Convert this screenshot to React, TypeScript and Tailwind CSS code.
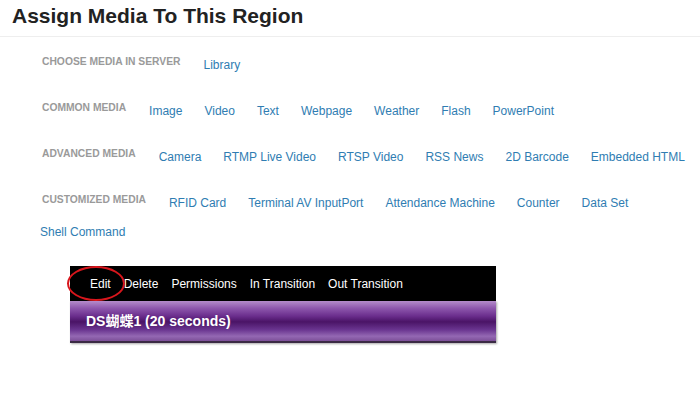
import React from "react";

const rows: { label: string; links: string[] }[] = [
  { label: "Choose Media In Server", links: ["Library"] },
  { label: "Common Media", links: ["Image", "Video", "Text", "Webpage", "Weather", "Flash", "PowerPoint"] },
  { label: "Advanced Media", links: ["Camera", "RTMP Live Video", "RTSP Video", "RSS News", "2D Barcode", "Embedded HTML"] },
  {
    label: "Customized Media",
    links: ["RFID Card", "Terminal AV InputPort", "Attendance Machine", "Counter", "Data Set", "Shell Command"],
  },
];

const actions = ["Edit", "Delete", "Permissions", "In Transition", "Out Transition"];

const App: React.FC = () => {
  return (
    <div className="w-[700px] h-[398px] bg-white overflow-hidden" style={{ fontFamily: '"Liberation Sans", Arial, "Noto Sans CJK SC", sans-serif' }}>
      {/* header */}
      <div className="h-[37px] border-b border-[#eeeeee] pl-[12px] pt-[3px]">
        <h1 className="text-[21px] leading-[26px] font-bold text-[#222222]">Assign Media To This Region</h1>
      </div>

      {/* media type rows */}
      <div className="pl-[40px] pr-[10px] pt-[14px] pb-[2px]">
        {rows.map((row) => (
          <div key={row.label} className="flex flex-wrap items-start gap-x-[22px] mb-[17px]">
            <span className="ml-[2px] mr-[1px] text-[10.3px] leading-[29px] -mt-[4px] font-bold uppercase text-[#9a9a9a]">
              {row.label}
            </span>
            {row.links.map((l) => (
              <a key={l} className="text-[12px] leading-[29px] text-[#2f7db2] cursor-pointer">
                {l}
              </a>
            ))}
          </div>
        ))}
      </div>

      {/* region timeline */}
      <div className="ml-[70px] w-[426px]">
        <div className="relative h-[35px] bg-black flex items-center gap-x-[13px] pl-[20px] pt-[1px]">
          {actions.map((a) => (
            <span key={a} className="text-[12px] text-white">
              {a}
            </span>
          ))}
          <div className="absolute left-[-3px] top-[0px] w-[58px] h-[35px] rounded-[50%] border-2 border-[#d8161c]" />
        </div>
        <div className="h-[42px] flex items-center pl-[16px] border-b-2 border-[#3a2a44] shadow-[1px_1px_2px_rgba(0,0,0,0.35)] bg-[linear-gradient(to_bottom,#b58ccb_0%,#8e57ad_18%,#6a2d8c_38%,#4a1466_52%,#6a3590_72%,#9468b3_88%,#7c4f98_100%)]">
          <span className="text-[14px] font-bold text-white">DS蝴蝶1 (20 seconds)</span>
        </div>
      </div>
    </div>
  );
};

export default App;
